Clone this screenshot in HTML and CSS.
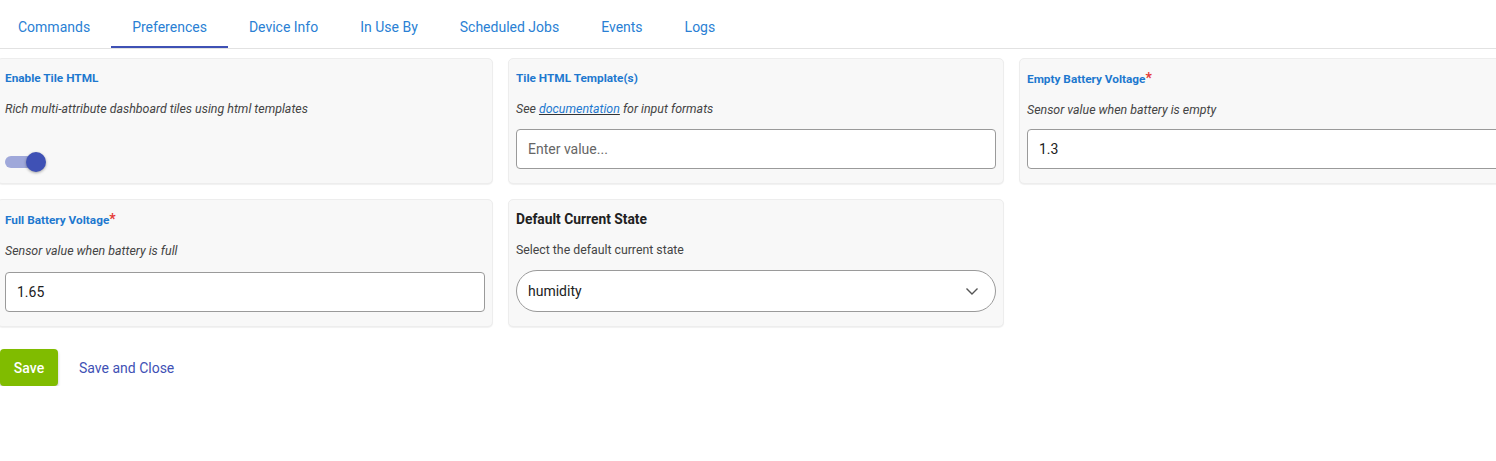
FILE: index.html
```html
<!DOCTYPE html>
<html>
<head>
<meta charset="utf-8">
<link rel="stylesheet" href="styles.css">
</head>
<body>
<nav class="tabs">
  <a class="tab">Commands</a>
  <a class="tab active">Preferences</a>
  <a class="tab">Device Info</a>
  <a class="tab">In Use By</a>
  <a class="tab">Scheduled Jobs</a>
  <a class="tab">Events</a>
  <a class="tab">Logs</a>
</nav>
<div class="grid">
  <section class="card">
    <div class="title">Enable Tile HTML</div>
    <div class="desc">Rich multi-attribute dashboard tiles using html templates</div>
    <div class="control toggle-wrap">
      <div class="toggle"><span class="track"></span><span class="thumb"></span></div>
    </div>
  </section>
  <section class="card">
    <div class="title">Tile HTML Template(s)</div>
    <div class="desc">See <a class="doc">documentation</a> for input formats</div>
    <div class="control"><div class="input placeholder">Enter value...</div></div>
  </section>
  <section class="card">
    <div class="title">Empty Battery Voltage<span class="req">*</span></div>
    <div class="desc">Sensor value when battery is empty</div>
    <div class="control"><div class="input">1.3</div></div>
  </section>
  <section class="card">
    <div class="title">Full Battery Voltage<span class="req">*</span></div>
    <div class="desc">Sensor value when battery is full</div>
    <div class="control"><div class="input">1.65</div></div>
  </section>
  <section class="card">
    <div class="title plain">Default Current State</div>
    <div class="desc upright">Select the default current state</div>
    <div class="control">
      <div class="select"><span>humidity</span>
        <svg class="chev" width="14" height="9" viewBox="0 0 14 9"><polyline points="1.5,1.5 7,7 12.5,1.5" fill="none" stroke="#555" stroke-width="1.4"/></svg>
      </div>
    </div>
  </section>
</div>
<div class="actions">
  <button class="save">Save</button>
  <a class="save-close">Save and Close</a>
</div>
</body>
</html>
```
FILE: styles.css
```css
html, body {
  margin: 0;
  padding: 0;
  overflow: hidden;
  background: #fff;
  font-family: Roboto, "Liberation Sans", sans-serif;
  color: #212121;
}
.tabs {
  display: flex;
  height: 48px;
  border-bottom: 1px solid #e2e2e2;
  margin-left: -3px;
}
.tab {
  box-sizing: border-box;
  height: 48px;
  padding: 8px 21px 0;
  display: flex;
  align-items: center;
  font-size: 14px;
  color: #2a7fd4;
  border-bottom: 2px solid transparent;
  cursor: pointer;
}
.tab.active {
  border-bottom-color: #3f51b5;
}
.grid {
  display: grid;
  grid-template-columns: repeat(3, 496px);
  gap: 15px;
  margin: 9px 0 0 -3px;
}
.card {
  box-sizing: border-box;
  background: #f8f8f8;
  border: 1px solid #ededed;
  border-radius: 5px;
  box-shadow: 0 1px 1px rgba(0,0,0,0.06);
  padding: 11px 7px 14px;
  display: flex;
  flex-direction: column;
}
.title {
  font-size: 11.8px;
  line-height: 16px;
  font-weight: 700;
  color: #1e78cf;
}
.title.plain {
  font-size: 13.8px;
  color: #212121;
}
.req {
  color: #e53935;
  font-size: 14px;
}
.desc {
  margin-top: 15px;
  font-size: 12.4px;
  line-height: 16px;
  font-style: italic;
  color: #444;
}
.desc.upright {
  font-style: normal;
  font-size: 12.3px;
}
.doc {
  color: #1e78cf;
  text-decoration: underline;
  text-decoration-color: #333;
}
.control {
  margin-top: auto;
  padding-top: 11px;
}
.input {
  box-sizing: border-box;
  height: 40px;
  border: 1px solid #9a9a9a;
  border-radius: 4px;
  background: #fff;
  padding: 0 11px;
  display: flex;
  align-items: center;
  font-size: 14px;
  color: #212121;
}
.input.placeholder {
  color: #666;
}
.select {
  box-sizing: border-box;
  height: 42px;
  margin-top: 1px;
  border: 1px solid #9a9a9a;
  border-radius: 21px;
  background: #fff;
  padding: 0 16px 0 11px;
  display: flex;
  align-items: center;
  justify-content: space-between;
  font-size: 14px;
  color: #212121;
}
.toggle-wrap {
  margin-bottom: -3px;
}
.toggle {
  position: relative;
  width: 42px;
  height: 20px;
}
.track {
  position: absolute;
  left: 0;
  top: 4px;
  width: 34px;
  height: 12px;
  border-radius: 6px;
  background: #9fa8da;
}
.thumb {
  position: absolute;
  left: 21px;
  top: 0;
  width: 20px;
  height: 20px;
  border-radius: 50%;
  background: #3f51b5;
  box-shadow: 0 1px 3px rgba(0,0,0,0.35);
}
.actions {
  display: flex;
  align-items: center;
  gap: 21px;
  margin-top: 22px;
}
.save {
  width: 58px;
  height: 37px;
  border: none;
  border-radius: 4px;
  background: #80bc00;
  color: #fff;
  font-family: Roboto, "Liberation Sans", sans-serif;
  font-size: 14px;
  font-weight: 500;
  box-shadow: 0 2px 3px rgba(0,0,0,0.25);
  padding: 0;
}
.save-close {
  font-size: 14px;
  color: #3f51b5;
  cursor: pointer;
}
```
